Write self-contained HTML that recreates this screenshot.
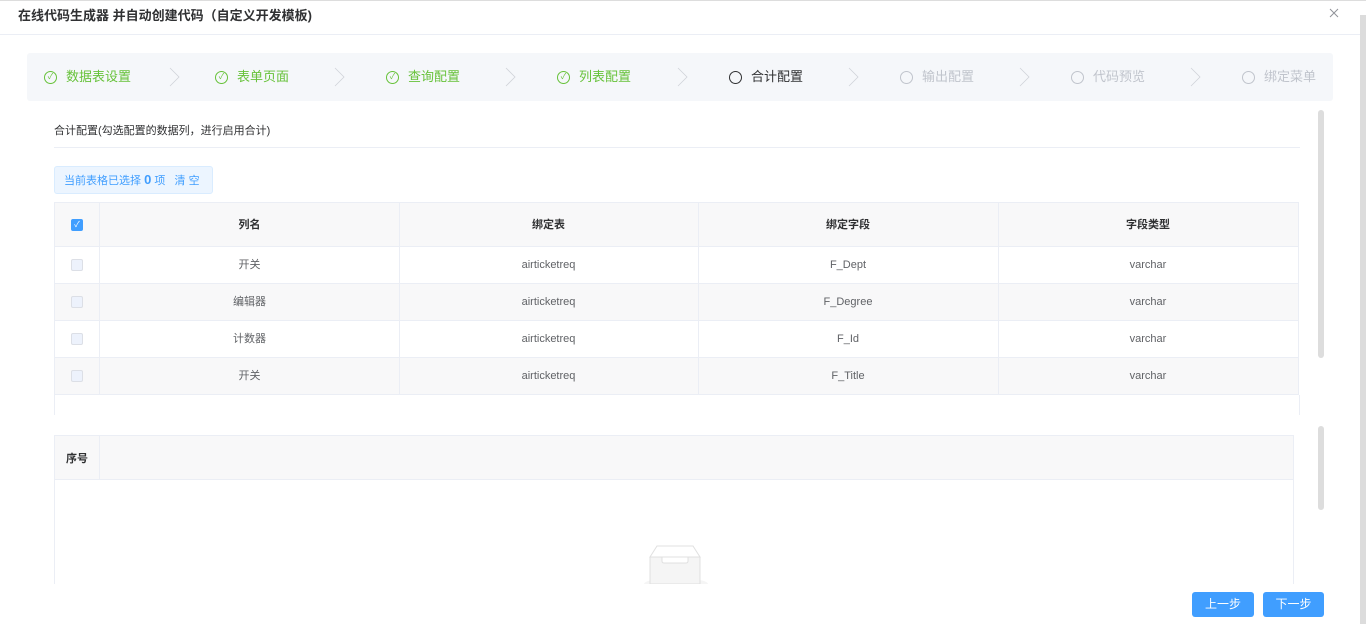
<!DOCTYPE html>
<html><head><meta charset="utf-8"><style>
*{box-sizing:border-box;margin:0;padding:0}
body{width:1366px;height:624px;overflow:hidden;background:#fff;font-family:"Liberation Sans","Noto Sans CJK SC",sans-serif;position:relative;color:#303133}
.a{position:absolute}
.step{position:absolute;top:68px;font-size:13px;line-height:18px;display:flex;align-items:center}
.step .c{width:13px;height:13px;border:1px solid currentColor;border-radius:50%;margin-right:9px;display:flex;align-items:center;justify-content:center;font-size:8px}
.chev{position:absolute;top:67px;width:12px;height:20px}
.cell{position:absolute;font-size:11px;color:#606266;text-align:center;line-height:14px}
.cb{position:absolute;width:12px;height:12px;border:1px solid #dcdfe6;background:#edf2fc;border-radius:2px}
</style></head><body>
<div class="a" style="left:0;top:0;width:1366px;height:1px;background:#ddd"></div>
<div class="a" style="left:18px;top:5px;font-size:13px;font-weight:bold;color:#303133">在线代码生成器 并自动创建代码（自定义开发模板)</div>
<svg class="a" style="left:1329px;top:8px" width="10" height="10" viewBox="0 0 10 10"><path d="M1 1 L9 9 M9 1 L1 9" stroke="#909399" stroke-width="1"/></svg>
<div class="a" style="left:0;top:34px;width:1360px;height:1px;background:#ebeef5"></div>
<div class="a" style="left:1360px;top:15px;width:6px;height:609px;background:#dcdcdc"></div>
<div class="a" style="left:27px;top:53px;width:1306px;height:48px;background:#f5f7fa;border-radius:3px"></div>
<div class="step" style="left:44px;color:#67c23a"><span class="c">✓</span>数据表设置</div>
<div class="step" style="left:215px;color:#67c23a"><span class="c">✓</span>表单页面</div>
<div class="step" style="left:386px;color:#67c23a"><span class="c">✓</span>查询配置</div>
<div class="step" style="left:557px;color:#67c23a"><span class="c">✓</span>列表配置</div>
<div class="step" style="left:729px;color:#303133"><span class="c"></span>合计配置</div>
<div class="step" style="left:900px;color:#c0c4cc"><span class="c"></span>输出配置</div>
<div class="step" style="left:1071px;color:#c0c4cc"><span class="c"></span>代码预览</div>
<div class="step" style="left:1242px;color:#c0c4cc"><span class="c"></span>绑定菜单</div>
<svg class="chev" style="left:169px" viewBox="0 0 12 20"><path d="M1 1 L10 10 L1 19" fill="none" stroke="#d0d3d9" stroke-width="0.8"/></svg>
<svg class="chev" style="left:334px" viewBox="0 0 12 20"><path d="M1 1 L10 10 L1 19" fill="none" stroke="#d0d3d9" stroke-width="0.8"/></svg>
<svg class="chev" style="left:505px" viewBox="0 0 12 20"><path d="M1 1 L10 10 L1 19" fill="none" stroke="#d0d3d9" stroke-width="0.8"/></svg>
<svg class="chev" style="left:677px" viewBox="0 0 12 20"><path d="M1 1 L10 10 L1 19" fill="none" stroke="#d0d3d9" stroke-width="0.8"/></svg>
<svg class="chev" style="left:848px" viewBox="0 0 12 20"><path d="M1 1 L10 10 L1 19" fill="none" stroke="#d0d3d9" stroke-width="0.8"/></svg>
<svg class="chev" style="left:1019px" viewBox="0 0 12 20"><path d="M1 1 L10 10 L1 19" fill="none" stroke="#d0d3d9" stroke-width="0.8"/></svg>
<svg class="chev" style="left:1190px" viewBox="0 0 12 20"><path d="M1 1 L10 10 L1 19" fill="none" stroke="#d0d3d9" stroke-width="0.8"/></svg>
<div class="a" style="left:54px;top:122px;font-size:11px;color:#303133">合计配置(勾选配置的数据列，进行启用合计)</div>
<div class="a" style="left:54px;top:147px;width:1246px;height:1px;background:#ebeef5"></div>
<div class="a" style="left:1318px;top:110px;width:6px;height:248px;background:#ddd;border-radius:3px"></div>
<div class="a" style="left:1318px;top:426px;width:6px;height:84px;background:#ddd;border-radius:3px"></div>
<div class="a" style="left:54px;top:166px;width:159px;height:28px;background:#ecf5ff;border:1px solid #d9ecff;border-radius:3px;font-size:11px;color:#409eff;line-height:26px;padding-left:9px">当前表格已选择 <b style="font-size:13px">0</b> 项 &nbsp;&nbsp;清 空</div>
<div class="a" style="left:54px;top:202px;width:1245px;height:193px;border:1px solid #ebeef5"></div>
<div class="a" style="left:55px;top:203px;width:1243px;height:44px;background:#f8f8f9"></div>
<div class="a" style="left:55px;top:284px;width:1243px;height:37px;background:#f8f8f9"></div>
<div class="a" style="left:55px;top:358px;width:1243px;height:37px;background:#f8f8f9"></div>
<div class="a" style="left:55px;top:246px;width:1243px;height:1px;background:#ebeef5"></div>
<div class="a" style="left:55px;top:283px;width:1243px;height:1px;background:#ebeef5"></div>
<div class="a" style="left:55px;top:320px;width:1243px;height:1px;background:#ebeef5"></div>
<div class="a" style="left:55px;top:357px;width:1243px;height:1px;background:#ebeef5"></div>
<div class="a" style="left:55px;top:394px;width:1243px;height:1px;background:#ebeef5"></div>
<div class="a" style="left:99px;top:203px;width:1px;height:192px;background:#ebeef5"></div>
<div class="a" style="left:399px;top:203px;width:1px;height:192px;background:#ebeef5"></div>
<div class="a" style="left:698px;top:203px;width:1px;height:192px;background:#ebeef5"></div>
<div class="a" style="left:998px;top:203px;width:1px;height:192px;background:#ebeef5"></div>
<div class="a" style="left:54px;top:395px;width:1px;height:20px;background:#ebeef5"></div>
<div class="a" style="left:1299px;top:395px;width:1px;height:20px;background:#ebeef5"></div>
<div class="cb" style="left:71px;top:219px;background:#409eff;border-color:#409eff;color:#fff;font-size:8px;line-height:10px;text-align:center">✓</div>
<div class="cell" style="left:100px;top:218px;width:299px;font-weight:bold;color:#303133">列名</div>
<div class="cell" style="left:399px;top:218px;width:299px;font-weight:bold;color:#303133">绑定表</div>
<div class="cell" style="left:698px;top:218px;width:300px;font-weight:bold;color:#303133">绑定字段</div>
<div class="cell" style="left:998px;top:218px;width:300px;font-weight:bold;color:#303133">字段类型</div>
<div class="cb" style="left:71px;top:259px"></div><div class="cb" style="left:71px;top:296px"></div><div class="cb" style="left:71px;top:333px"></div><div class="cb" style="left:71px;top:370px"></div>
<div class="cell" style="left:100px;top:258px;width:299px">开关</div><div class="cell" style="left:399px;top:258px;width:299px">airticketreq</div><div class="cell" style="left:698px;top:258px;width:300px">F_Dept</div><div class="cell" style="left:998px;top:258px;width:300px">varchar</div>
<div class="cell" style="left:100px;top:295px;width:299px">编辑器</div><div class="cell" style="left:399px;top:295px;width:299px">airticketreq</div><div class="cell" style="left:698px;top:295px;width:300px">F_Degree</div><div class="cell" style="left:998px;top:295px;width:300px">varchar</div>
<div class="cell" style="left:100px;top:332px;width:299px">计数器</div><div class="cell" style="left:399px;top:332px;width:299px">airticketreq</div><div class="cell" style="left:698px;top:332px;width:300px">F_Id</div><div class="cell" style="left:998px;top:332px;width:300px">varchar</div>
<div class="cell" style="left:100px;top:369px;width:299px">开关</div><div class="cell" style="left:399px;top:369px;width:299px">airticketreq</div><div class="cell" style="left:698px;top:369px;width:300px">F_Title</div><div class="cell" style="left:998px;top:369px;width:300px">varchar</div>
<div class="a" style="left:54px;top:435px;width:1240px;height:149px;border:1px solid #ebeef5;border-bottom:none"></div>
<div class="a" style="left:55px;top:436px;width:1238px;height:44px;background:#f8f8f9;border-bottom:1px solid #ebeef5"></div>
<div class="a" style="left:99px;top:436px;width:1px;height:44px;background:#ebeef5"></div>
<div class="cell" style="left:55px;top:452px;width:44px;font-weight:bold;color:#303133">序号</div>
<svg class="a" style="left:640px;top:544px" width="72" height="40" viewBox="0 0 72 40"><ellipse cx="36" cy="40" rx="32" ry="6" fill="#f5f5f5"/><path d="M10 13 L17 2 L53 2 L60 13 Z" fill="#fff" stroke="#e0e0e0"/><path d="M10 13 H22 V17 Q22 19 24 19 H46 Q48 19 48 17 V13 H60 V40 H10 Z" fill="#f5f5f5" stroke="#e0e0e0"/></svg>
<div class="a" style="left:0;top:584px;width:1360px;height:40px;background:#fff"></div>
<div class="a" style="left:1192px;top:592px;width:62px;height:25px;background:#409eff;border-radius:3px;color:#fff;font-size:12px;line-height:25px;text-align:center">上一步</div>
<div class="a" style="left:1263px;top:592px;width:61px;height:25px;background:#409eff;border-radius:3px;color:#fff;font-size:12px;line-height:25px;text-align:center">下一步</div>
</body></html>
